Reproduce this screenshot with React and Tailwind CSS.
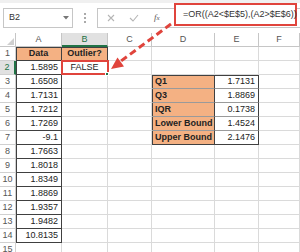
import React from 'react';

const aVals = ['1.5895','1.6508','1.7131','1.7212','1.7269','-9.1','1.7663','1.8018','1.8349','1.8869','1.9357','1.9482','10.8135'];
const stats = [['Q1','1.7131'],['Q3','1.8869'],['IQR','0.1738'],['Lower Bound','1.4524'],['Upper Bound','2.1476']];

const grid = 'border-r border-b border-[#dadada]';
const base = 'h-[14px] flex items-center text-[9px] leading-none text-[#222] overflow-hidden whitespace-nowrap';

function RowCells({ r }) {
  const cells = [];
  // row header
  if (r === 2) {
    cells.push(<div key="h" className={`${base} justify-center bg-[#e1e1e1] text-[#217346] border-r-2 border-r-[#217346] border-b border-b-[#d0d0d0]`}>{r}</div>);
  } else {
    cells.push(<div key="h" className={`${base} justify-center bg-white text-[#555] border-r border-b border-[#d0d0d0]`}>{r}</div>);
  }
  // A
  if (r === 1) {
    cells.push(<div key="a" className={`${base} justify-center font-bold bg-[#f4b183] border-r border-b border-[#404040] shadow-[inset_1px_1px_0_#404040]`}>Data</div>);
  } else if (r <= 14) {
    cells.push(<div key="a" className={`${base} justify-end pr-[3px] bg-white border-r border-b border-[#404040] shadow-[inset_1px_0_0_#404040]`}>{aVals[r - 2]}</div>);
  } else {
    cells.push(<div key="a" className={`${base} ${grid}`}></div>);
  }
  // B
  if (r === 1) {
    cells.push(<div key="b" className={`${base} justify-center font-bold bg-[#f4b183] border-r border-b border-[#404040] shadow-[inset_0_1px_0_#404040]`}>Outlier?</div>);
  } else if (r === 2) {
    cells.push(
      <div key="b" className={`${base} justify-center relative bg-white ${grid} overflow-visible`}>
        FALSE
        <div className="absolute -left-[1px] -top-[1px] w-[48px] h-[15px] border-2 border-[#e0443c]"></div>
        <div className="absolute -right-[2px] -bottom-[2px] w-[4px] h-[4px] bg-[#217346] border border-white"></div>
      </div>
    );
  } else {
    cells.push(<div key="b" className={`${base} ${grid}`}></div>);
  }
  // C
  cells.push(<div key="c" className={`${base} ${grid}`}></div>);
  // D & E
  if (r >= 3 && r <= 7) {
    const [label, val] = stats[r - 3];
    const last = r === 7;
    const bb = last ? 'border-b-[#404040]' : 'border-b-[#9a9a9a]';
    const dShadow = r === 3 ? 'shadow-[inset_1px_1px_0_#404040]' : 'shadow-[inset_1px_0_0_#404040]';
    const eShadow = r === 3 ? 'shadow-[inset_0_1px_0_#404040]' : '';
    cells.push(<div key="d" className={`${base} pl-[3px] font-bold bg-[#f4b183] border-r border-r-[#404040] border-b ${bb} ${dShadow}`}>{label}</div>);
    cells.push(<div key="e" className={`${base} justify-end pr-[3px] bg-white border-r border-r-[#404040] border-b ${bb} ${eShadow}`}>{val}</div>);
  } else {
    cells.push(<div key="d" className={`${base} ${grid}`}></div>);
    cells.push(<div key="e" className={`${base} ${grid}`}></div>);
  }
  // F
  cells.push(<div key="f" className={`${base} ${grid}`}></div>);
  return cells;
}

export default function App() {
  const rows = Array.from({ length: 15 }, (_, i) => i + 1);
  const heads = ['A', 'B', 'C', 'D', 'E', 'F'];
  return (
    <div className="w-[300px] h-[252px] bg-white overflow-hidden relative font-['Liberation_Sans',Arial,sans-serif]">
      {/* formula bar */}
      <div className="h-[33px] flex items-start bg-white border-t-[3px] border-[#f0f0f0]">
        <div className="ml-[3px] mt-[5px] w-[70px] h-[20px] border border-[#c6c6c6] flex items-center justify-between pl-[5px] pr-[3px] text-[9px] text-[#333]">
          <span>B2</span>
          <svg width="6" height="4" viewBox="0 0 6 4"><polygon points="0,0 6,0 3,3.5" fill="#777" /></svg>
        </div>
        <div className="w-[24px] h-[20px] mt-[5px] flex flex-col items-center justify-center gap-[2px]">
          <div className="w-[2px] h-[2px] bg-[#aaa]"></div>
          <div className="w-[2px] h-[2px] bg-[#aaa]"></div>
          <div className="w-[2px] h-[2px] bg-[#aaa]"></div>
        </div>
        <div className="mt-[5px] h-[20px] flex-1 border border-r-0 border-[#c6c6c6] flex items-center">
          <svg className="ml-[9px]" width="8" height="8" viewBox="0 0 8 8"><path d="M1 1 L7 7 M7 1 L1 7" stroke="#b5b5b5" strokeWidth="1.1" /></svg>
          <svg className="ml-[14px]" width="10" height="8" viewBox="0 0 10 8"><path d="M1 4 L4 7 L9 1" stroke="#b5b5b5" strokeWidth="1.1" fill="none" /></svg>
          <span className="ml-[15px] text-[9px] italic text-[#555] font-['Liberation_Serif',serif]">f<span className="text-[7px]">x</span></span>
        </div>
      </div>
      {/* red formula box */}
      <div className="absolute left-[174px] top-[3px] w-[123px] h-[23px] border-2 border-[#e0443c] bg-white flex items-center pl-[7px] text-[9px] text-[#333] whitespace-nowrap">
        =OR((A2&lt;$E$5),(A2&gt;$E$6))
      </div>
      {/* sheet */}
      <div className="grid grid-cols-[16px_46px_46px_44px_63px_44px_41px] auto-rows-[14px]">
        <div className="h-[14px] bg-white border-r border-b border-[#c6c6c6] flex items-end justify-end pr-[1px] pb-[1px]">
          <svg width="7" height="7" viewBox="0 0 7 7"><polygon points="7,0 7,7 0,7" fill="#cfcfcf" /></svg>
        </div>
        {heads.map((h) =>
          h === 'B' ? (
            <div key={h} className={`${base} justify-center bg-[#e1e1e1] text-[#217346] border-r border-r-[#c6c6c6] border-b-2 border-b-[#217346]`}>{h}</div>
          ) : (
            <div key={h} className={`${base} justify-center bg-white text-[#555] border-r border-b border-[#c6c6c6]`}>{h}</div>
          )
        )}
        {rows.map((r) => (
          <RowCells key={r} r={r} />
        ))}
      </div>
      {/* arrow */}
      <svg className="absolute left-0 top-0 pointer-events-none" width="300" height="252" viewBox="0 0 300 252">
        <line x1="171" y1="24" x2="121" y2="61" stroke="#e0443c" strokeWidth="3" strokeDasharray="7 4" />
        <polygon points="111,69 124,66.5 117.5,57.5" fill="#e0443c" />
      </svg>
    </div>
  );
}
